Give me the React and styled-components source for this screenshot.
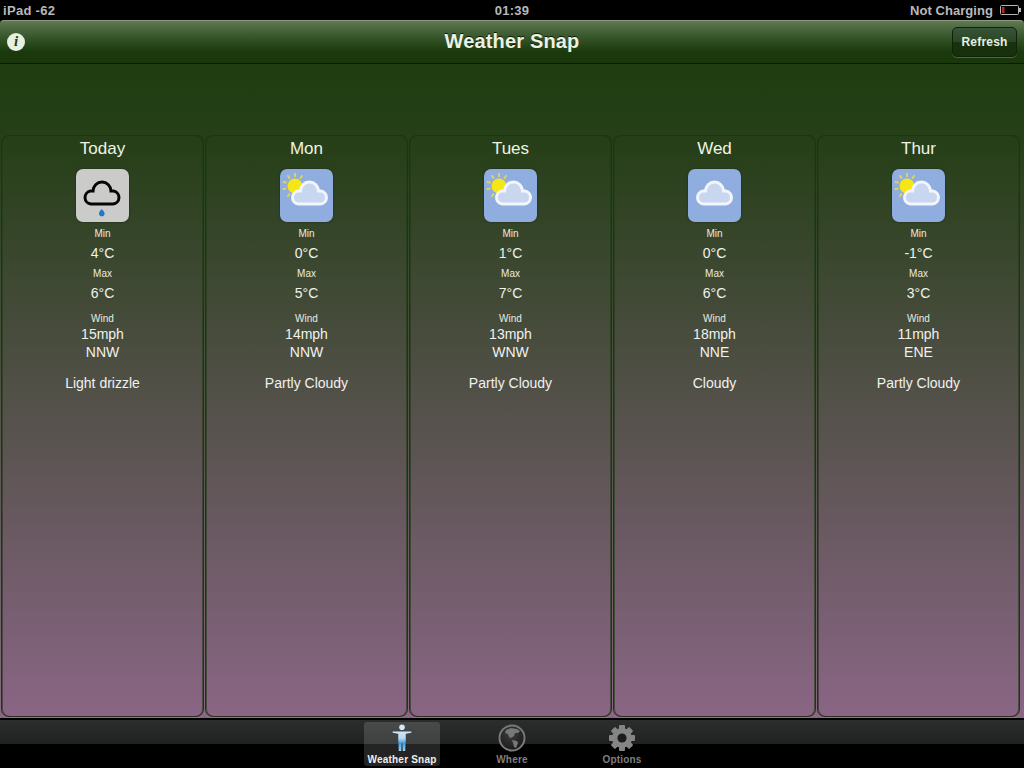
import React from "react";
import styled, { createGlobalStyle } from "styled-components";

const Global = createGlobalStyle`
  html, body { margin: 0; padding: 0; background: #000; }
  body { width: 1024px; height: 768px; overflow: hidden; font-family: "Liberation Sans", Arial, sans-serif; }
`;

const Screen = styled.div`
  width: 1024px; height: 768px; display: flex; flex-direction: column; background: #000;
`;
const StatusBar = styled.div`
  height: 20px; flex: none; display: grid; grid-template-columns: 1fr auto 1fr; align-items: center;
  padding: 0 3px 0 3px; color: #b9b9b9; font-size: 13px; font-weight: 700; letter-spacing: .3px;
`;
const StatusRight = styled.div`
  display: flex; justify-content: flex-end; align-items: center; gap: 7px; letter-spacing: .05px;
`;
const NavBar = styled.div`
  height: 44px; flex: none; box-sizing: border-box; display: grid; grid-template-columns: 1fr auto 1fr;
  align-items: center; padding: 0 7px 1px 7px; border-radius: 4px 4px 0 0;
  border-top: 1px solid #8b9b80; border-bottom: 1px solid #0c1a05;
  background: linear-gradient(#5f7a52 0%, #47643a 22%, #2d4c20 50%, #1b3a0d 72%, #1a360c 100%);
`;
const InfoButton = styled.div`
  width: 18px; height: 18px; border-radius: 50%; background: #e6efe0; color: #1f3a12;
  display: flex; align-items: center; justify-content: center;
  font: italic 700 15px "Liberation Serif", serif;
`;
const Title = styled.div`
  color: #eaf2e4; font-size: 20px; font-weight: 700; letter-spacing: .15px; text-shadow: 0 -1px 0 #0c1a05;
`;
const RefreshButton = styled.div`
  justify-self: end; width: 65px; height: 30px; box-sizing: border-box; border-radius: 5px;
  display: flex; align-items: center; justify-content: center; color: #e6efe0; font-size: 12px; font-weight: 700;
  letter-spacing: .2px; border: 1px solid #10230a; box-shadow: 0 1px 0 #4d6644;
  background: linear-gradient(#38543a 0%, #2a4621 50%, #1a3010 52%, #183009 100%);
`;
const Content = styled.div`
  flex: 1; min-height: 0; box-sizing: border-box; padding: 71px 4px 1px 1px;
  background: linear-gradient(#1f3d10 0%, #263f18 12%, #8a6685 100%);
  display: grid; grid-template-columns: repeat(5, 1fr); gap: 1px;
`;
const DayCard = styled.div`
  box-sizing: border-box; display: flex; flex-direction: column; align-items: center;
  border-radius: 8px; border: 1px solid #1d3510; border-bottom-color: #2e2a22;
  box-shadow: inset 1px 0 0 rgba(30, 60, 20, .6), inset -1px 0 0 rgba(30, 60, 20, .6), 0 1px 0 rgba(255,255,255,.1);
  color: #eef4ea; padding-top: 1px;
`;
const DayName = styled.div`
  font-size: 17px; line-height: 20px; margin-top: 2px; color: #eef4e6;
`;
const IconTile = styled.div`
  width: 53px; height: 53px; margin: 10px 0 5px; border-radius: 7px; overflow: hidden;
  background: ${p => p.$grey ? "#cbcbc9" : "#8fadde"};
  box-shadow: 0 0 2px rgba(0,0,0,.5);
  svg { display: block; }
`;
const Small = styled.div`
  font-size: 10px; line-height: 14px; margin-top: ${p => p.$top || 0}px; color: #e8ece4;
`;
const Value = styled.div`
  font-size: 14px; line-height: 18px; margin-top: ${p => p.$top || 0}px; color: #f0f2ee;
`;
const Desc = styled.div`
  font-size: 14px; line-height: 18px; margin-top: 13px; color: #f0f2ee;
`;
const TabBar = styled.div`
  height: 48px; flex: none; margin-top: 2px; display: flex; justify-content: center; gap: 34px; box-sizing: border-box;
  padding-top: 2px;
  background: linear-gradient(#2c2e2e 0%, #202222 50%, #000 50%, #000 100%);
`;
const Tab = styled.div`
  width: 76px; height: 44px; border-radius: 3px; display: flex; flex-direction: column; align-items: center;
  background: ${p => p.$active ? "rgba(255,255,255,.14)" : "transparent"};
  color: ${p => p.$active ? "#eef0ee" : "#7f7f7f"};
  font-size: 10px; font-weight: 700; letter-spacing: .2px;
  svg { display: block; margin-top: 2px; }
  span { line-height: 13px; margin-top: 1px; }
`;

const cloud = "M6.5 23H28.5A6.5 6.5 0 0 0 29 10.1H26.5A9 9 0 0 0 8.5 10.1H6A6.5 6.5 0 0 0 6.5 23Z";

const RainIcon = () => (
  <svg width="53" height="53" viewBox="0 0 53 53">
    <path transform="translate(8.5 12)" d={cloud} fill="none" stroke="#050505" strokeWidth="3" />
    <path d="M25.7 40c-1 1.5-2.7 2.6-2.7 4.4a2.8 2.8 0 0 0 5.6 0c0-1.8-2-2.9-2.9-4.4Z" fill="#1f78c8" />
  </svg>
);
const CloudIcon = () => (
  <svg width="53" height="53" viewBox="0 0 53 53">
    <path transform="translate(9 12)" d={cloud} fill="#c9d6ef" stroke="#f2f5fb" strokeWidth="3" />
  </svg>
);
const rays = [-160, -125, -90, -55, -20, 165, 125];
const PartlyIcon = () => (
  <svg width="53" height="53" viewBox="0 0 53 53">
    {rays.map(a => (
      <line key={a} x1="25" y1="17" x2="29" y2="17" stroke="#e4d654" strokeWidth="1.8"
        transform={`rotate(${a} 15 17) translate(-1 0)`} />
    ))}
    <circle cx="15" cy="17" r="7.5" fill="#f6e615" />
    <path transform="translate(12 12)" d={cloud} fill="#c9d6ef" stroke="#f2f5fb" strokeWidth="3" />
  </svg>
);

const icons = { rain: RainIcon, cloud: CloudIcon, partly: PartlyIcon };

const days = [
  { name: "Today", icon: "rain", min: "4°C", max: "6°C", wind: "15mph", dir: "NNW", desc: "Light drizzle" },
  { name: "Mon", icon: "partly", min: "0°C", max: "5°C", wind: "14mph", dir: "NNW", desc: "Partly Cloudy" },
  { name: "Tues", icon: "partly", min: "1°C", max: "7°C", wind: "13mph", dir: "WNW", desc: "Partly Cloudy" },
  { name: "Wed", icon: "cloud", min: "0°C", max: "6°C", wind: "18mph", dir: "NNE", desc: "Cloudy" },
  { name: "Thur", icon: "partly", min: "-1°C", max: "3°C", wind: "11mph", dir: "ENE", desc: "Partly Cloudy" },
];

const Battery = () => (
  <svg width="21" height="10" viewBox="0 0 21 10">
    <rect x=".5" y=".5" width="18" height="9" rx="1" fill="none" stroke="#b5b5b5" />
    <rect x="19" y="3" width="2" height="4" fill="#b5b5b5" />
    <rect x="2" y="2" width="2.5" height="6" fill="#b02a2a" />
  </svg>
);

const Person = () => (
  <svg width="24" height="29" viewBox="0 0 24 30">
    <defs>
      <linearGradient id="body" x1="0" y1="0" x2="0" y2="1">
        <stop offset="0" stopColor="#d5e8f6" />
        <stop offset=".35" stopColor="#b5d9f2" />
        <stop offset=".6" stopColor="#3f9ce0" />
        <stop offset="1" stopColor="#a5d4ee" />
      </linearGradient>
    </defs>
    <circle cx="12" cy="3.5" r="3" fill="#d5e8f6" />
    <path d="M2 8H22V9.5L16 10.5V18L15.4 29H12.8L12.3 20H11.7L11.2 29H8.6L8 18V10.5L2 9.5Z" fill="url(#body)" />
  </svg>
);

const Globe = () => (
  <svg width="28" height="28" viewBox="0 0 28 28">
    <defs>
      <radialGradient id="sea" cx=".45" cy=".35" r=".75">
        <stop offset="0" stopColor="#3e3e3e" />
        <stop offset="1" stopColor="#141414" />
      </radialGradient>
    </defs>
    <circle cx="14" cy="14" r="12.5" fill="url(#sea)" stroke="#7a7a7a" strokeWidth="2" />
    <path d="M8 6l5-2 6 1 3 2-2 2-3 0-1 3-3 2-2-1-1-3-3-1ZM14 16l5 1 1 2-2 5-2-1-1-4Z" fill="#777" />
  </svg>
);

const teeth = [0, 45, 90, 135];
const Gear = () => (
  <svg width="28" height="28" viewBox="0 0 28 28">
    {teeth.map(a => (
      <rect key={a} x="11" y="1" width="6" height="26" rx="1" fill="#858585" transform={`rotate(${a} 14 14)`} />
    ))}
    <circle cx="14" cy="14" r="10" fill="#858585" />
    <circle cx="14" cy="14" r="4.6" fill="#1c1c1c" />
  </svg>
);

export default function App() {
  return (
    <Screen>
      <Global />
      <StatusBar>
        <span>iPad -62</span>
        <span>01:39</span>
        <StatusRight>Not Charging <Battery /></StatusRight>
      </StatusBar>
      <NavBar>
        <InfoButton>i</InfoButton>
        <Title>Weather Snap</Title>
        <RefreshButton>Refresh</RefreshButton>
      </NavBar>
      <Content>
        {days.map(d => {
          const Icon = icons[d.icon];
          return (
            <DayCard key={d.name}>
              <DayName>{d.name}</DayName>
              <IconTile $grey={d.icon === "rain"}><Icon /></IconTile>
              <Small>Min</Small>
              <Value $top={3}>{d.min}</Value>
              <Small $top={5}>Max</Small>
              <Value $top={3}>{d.max}</Value>
              <Small $top={10}>Wind</Small>
              <Value $top={-1}>{d.wind}</Value>
              <Value>{d.dir}</Value>
              <Desc>{d.desc}</Desc>
            </DayCard>
          );
        })}
      </Content>
      <TabBar>
        <Tab $active><Person /><span>Weather Snap</span></Tab>
        <Tab><Globe /><span>Where</span></Tab>
        <Tab><Gear /><span>Options</span></Tab>
      </TabBar>
    </Screen>
  );
}
